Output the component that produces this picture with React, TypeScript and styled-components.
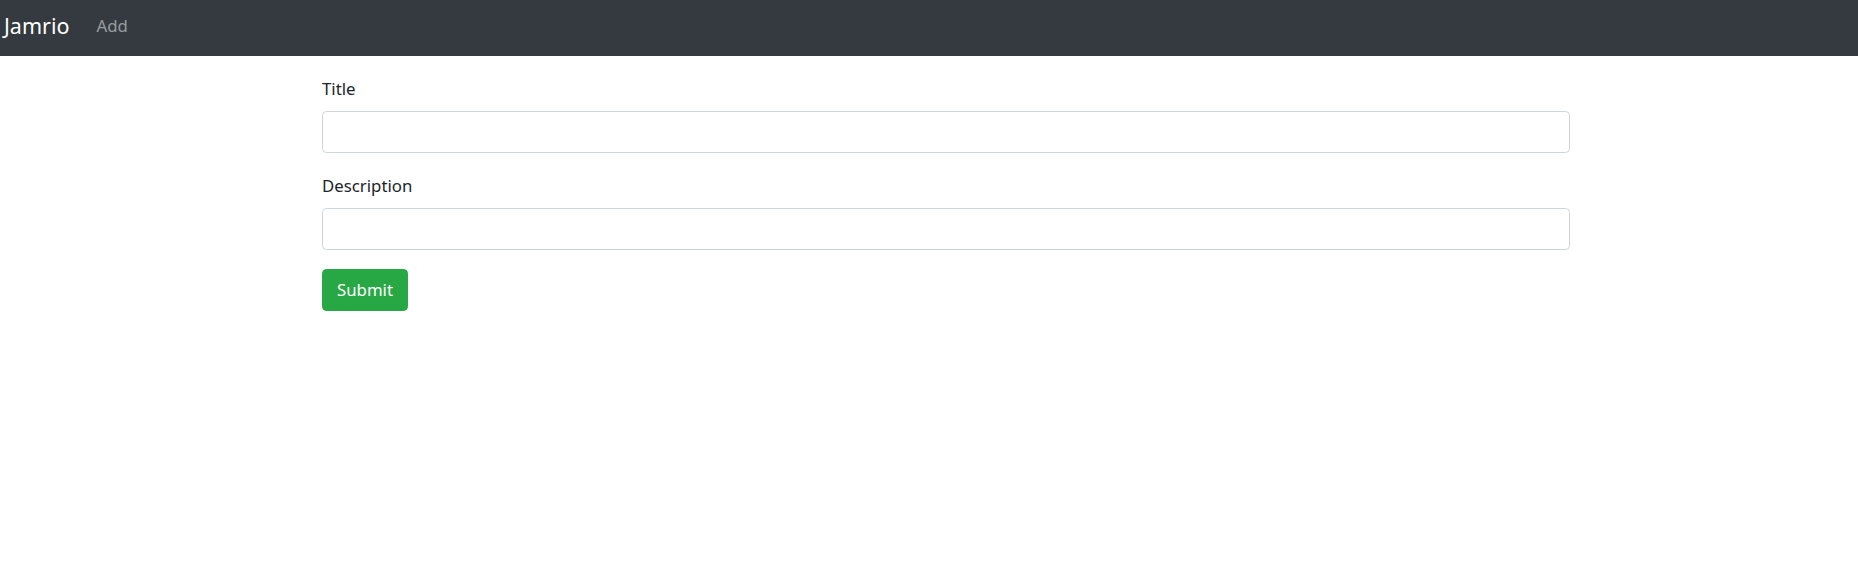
import React from "react";
import styled, { createGlobalStyle } from "styled-components";

const GlobalStyle = createGlobalStyle`
  html, body {
    margin: 0;
    padding: 0;
    background: #ffffff;
  }
  body {
    font-family: "Segoe UI", "Noto Sans", "Open Sans", Arial, sans-serif;
    font-size: 16.8px;
    color: #212529;
  }
  * { box-sizing: border-box; }
`;

const NavBar = styled.nav`
  height: 56px;
  background: #343a40;
  display: flex;
  align-items: center;
  padding: 0 4px 5px;
  gap: 27px;
`;

const Brand = styled.a`
  font-size: 21.5px;
  line-height: 33px;
  color: #ffffff;
  text-decoration: none;
`;

const NavLink = styled.a`
  font-size: 16.8px;
  line-height: 26px;
  color: rgba(255, 255, 255, 0.5);
  text-decoration: none;
`;

const Form = styled.form`
  width: 1248px;
  margin-left: 322px;
  padding-top: 20px;
`;

const Group = styled.div`
  margin-bottom: 19.5px;
`;

const Label = styled.label`
  display: block;
  font-size: 16.8px;
  line-height: 26px;
  margin-bottom: 9px;
  color: #212529;
`;

const Input = styled.input`
  display: block;
  width: 100%;
  height: 42px;
  padding: 6px 13px;
  font-family: inherit;
  font-size: 16.8px;
  color: #495057;
  background: #ffffff;
  border: 1px solid #ced4da;
  border-radius: 4.4px;
  outline: none;
`;

const SubmitButton = styled.button`
  display: inline-block;
  height: 42px;
  padding: 0 14px;
  font-family: inherit;
  font-size: 16.8px;
  line-height: 26px;
  color: #ffffff;
  background: #28a745;
  border: 1px solid #28a745;
  border-radius: 4.4px;
  cursor: pointer;
`;

export default function App() {
  return (
    <>
      <GlobalStyle />
      <NavBar>
        <Brand href="#">Jamrio</Brand>
        <NavLink href="#">Add</NavLink>
      </NavBar>
      <Form onSubmit={(e) => e.preventDefault()}>
        <Group>
          <Label htmlFor="title">Title</Label>
          <Input id="title" type="text" />
        </Group>
        <Group>
          <Label htmlFor="description">Description</Label>
          <Input id="description" type="text" />
        </Group>
        <SubmitButton type="submit">Submit</SubmitButton>
      </Form>
    </>
  );
}
